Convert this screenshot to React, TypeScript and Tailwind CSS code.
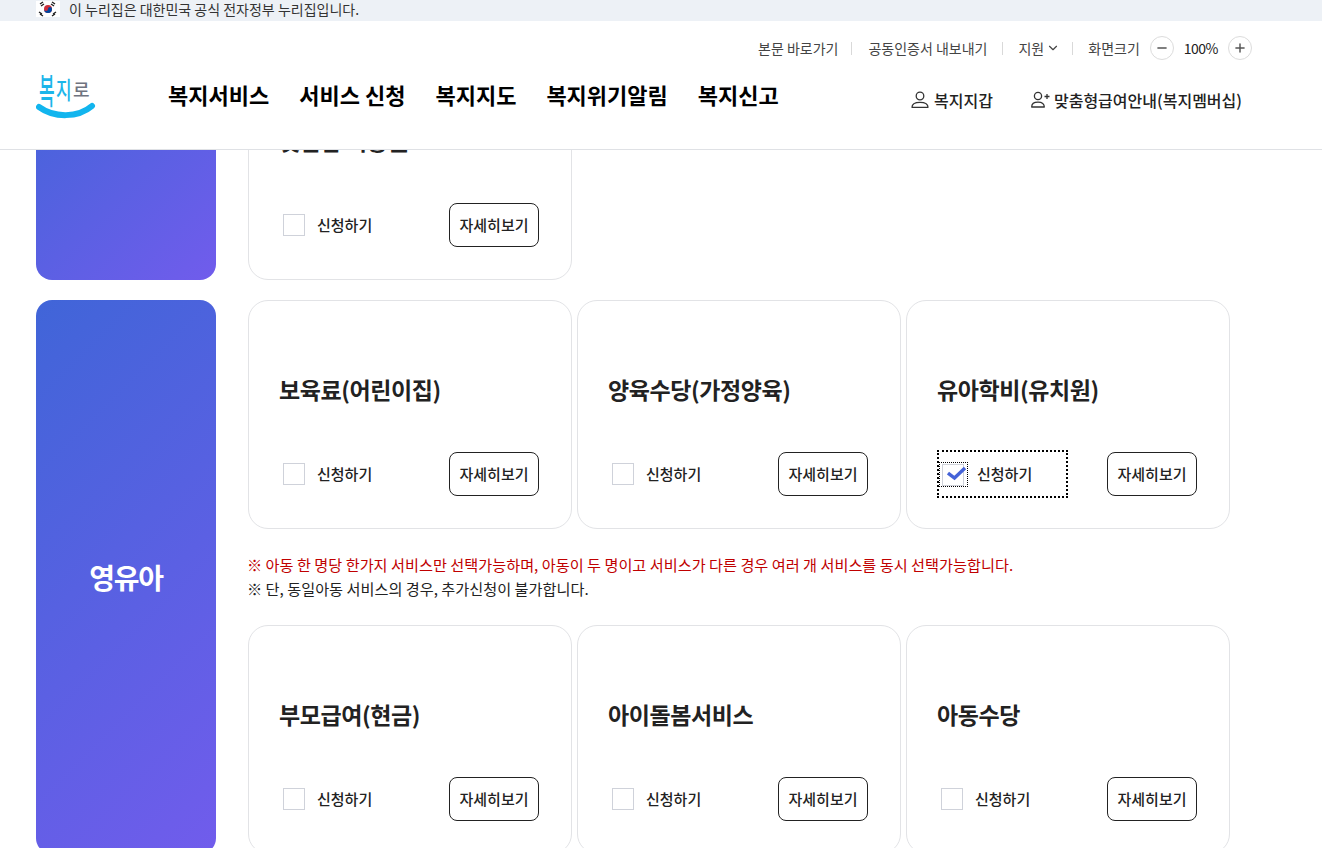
import { ChevronDown, Minus, Plus } from "lucide-react"

const font = { fontFamily: '"Noto Sans CJK KR", "Noto Sans", sans-serif' }

const menus = ["복지서비스", "서비스 신청", "복지지도", "복지위기알림", "복지신고"]

function Flag() {
  return (
    <svg width="24" height="16" viewBox="0 0 24 16" className="bg-white">
      <circle cx="12" cy="8" r="4" fill="#cd2e3a" />
      <path d="M8 8a4 4 0 0 0 8 0a2 2 0 0 0-4 0a2 2 0 0 1-4 0z" fill="#0047a0" />
      <path d="M4 3l3-2M5 5l3-2M16 1l3 2M15 3l3 2M4 13l3 2M3 11l3 2M16 15l3-2M17 13l3-2" stroke="#222" strokeWidth="1.4" />
    </svg>
  )
}

function Logo() {
  return (
    <div className="relative h-[52px] w-[60px]">
      <span className="absolute left-[3px] top-[8px] origin-center scale-y-[2.1] text-[17px] font-medium leading-[24px] text-[#1cb5ea]">복</span>
      <span className="absolute left-[20px] top-[8px] origin-center scale-y-[1.4] text-[17px] font-medium leading-[24px] text-[#1cb5ea]">지</span>
      <span className="absolute left-[37px] top-[8px] text-[18px] font-medium leading-[24px] text-[#6f7480]">로</span>
      <svg className="absolute left-0 top-[33px]" width="60" height="22" viewBox="0 0 60 22">
        <path d="M3 5C18 16 42 16 56 4" fill="none" stroke="#12b5ee" strokeWidth="6" strokeLinecap="round" />
      </svg>
    </div>
  )
}

function UserIcon({ plus }: { plus?: boolean }) {
  if (plus) {
    return (
      <svg width="20" height="18" viewBox="0 0 20 18" fill="none" stroke="#333" strokeWidth="1.3">
        <circle cx="8" cy="5" r="3.6" />
        <path d="M1.7 16c0-3.2 2-4.8 6.300-4.800s6.300 1.600 6.300 4.800z" strokeLinejoin="round" />
        <path d="M14.500 5.500h5M17 3v5" />
      </svg>
    )
  }
  return (
    <svg width="20" height="18" viewBox="0 0 20 18" fill="none" stroke="#333" strokeWidth="1.3">
      <circle cx="11" cy="5" r="3.800" />
      <path d="M3 16.300c0-3.400 2.800-5 8-5s8 1.600 8 5z" strokeLinejoin="round" />
    </svg>
  )
}

function Header() {
  return (
    <header className="relative z-10 h-[129px] shrink-0 border-b border-[#dfe1e5] bg-white">
      <div className="flex h-[54px] items-center justify-end pr-[70px] text-[14px] text-[#444]">
        <span>본문 바로가기</span>
        <span className="ml-[13px] mr-[16px] h-[13px] w-px bg-[#d9d9d9]" />
        <span>공동인증서 내보내기</span>
        <span className="mx-[15px] h-[13px] w-px bg-[#d9d9d9]" />
        <span className="flex items-center gap-[2px]">지원<ChevronDown size={14} /></span>
        <span className="ml-[12px] mr-[15px] h-[13px] w-px bg-[#d9d9d9]" />
        <span>화면크기</span>
        <span className="ml-[10px] flex h-[24px] w-[24px] items-center justify-center rounded-full border border-[#dcdcdc] text-[#555]"><Minus size={14} strokeWidth={2.5} /></span>
        <span className="mx-[10px] tracking-[-0.5px] text-[#222]">100%</span>
        <span className="flex h-[24px] w-[24px] items-center justify-center rounded-full border border-[#dcdcdc] text-[#555]"><Plus size={14} strokeWidth={2.5} /></span>
      </div>
      <div className="flex items-start pl-[36px] pr-[80px]">
        <div className="-mt-[6px]"><Logo /></div>
        <nav className="-mt-[1px] ml-[72px] flex gap-[30px] text-[22px] font-bold leading-[40px] text-black">
          {menus.map((menu) => <span key={menu}>{menu}</span>)}
        </nav>
        <div className="ml-auto flex items-center gap-[37px] pt-[5px] text-[16px] font-medium leading-[40px] text-[#222]">
          <span className="flex items-center gap-[5px]"><UserIcon />복지지갑</span>
          <span className="flex items-center gap-[4px]"><UserIcon plus />맞춤형급여안내(복지멤버십)</span>
        </div>
      </div>
    </header>
  )
}

function Card({ title, checked }: { title: string; checked?: boolean }) {
  return (
    <div className="flex h-[229px] w-[324px] flex-col rounded-[20px] border border-[#e2e3e6] bg-white pl-[30px] pr-[32px]">
      <div className="flex h-[151px] shrink-0 items-center pt-[26px] text-[23px] font-bold tracking-[-0.4px] text-[#222]">{title}</div>
      <div className="flex h-[44px] items-center justify-between">
        {checked ? (
          <div className="flex h-[48px] w-[131px] items-center border-2 border-dotted border-black text-[15px] font-medium text-[#222]">
            <span className="relative h-[25px] w-[29px] border border-dotted border-black">
              <span className="absolute left-[2px] top-[1px] h-[22px] w-[22px] border border-[#cfd2da]" />
              <svg className="absolute left-[7px] top-[3px]" width="20" height="16" viewBox="0 0 20 16"><path d="M1 7l6.500 5L18 2" fill="none" stroke="#4563d8" strokeWidth="3.4" /></svg>
            </span>
            <span className="ml-[9px]">신청하기</span>
          </div>
        ) : (
          <div className="flex items-center pl-[4px] text-[15px] font-medium text-[#222]">
            <span className="h-[22px] w-[22px] border border-[#cfd2da] bg-white" />
            <span className="ml-[12px]">신청하기</span>
          </div>
        )}
        <div className="flex h-[44px] w-[90px] items-center justify-center rounded-[8px] border border-[#222] text-[15px] font-medium text-[#222]">자세히보기</div>
      </div>
    </div>
  )
}

function Side({ label, className }: { label?: string; className: string }) {
  return (
    <div className={`flex w-[180px] shrink-0 items-center justify-center rounded-[16px] bg-[linear-gradient(135deg,#4065d8,#715cec)] text-[28px] font-bold tracking-[-1.2px] text-white ${className}`}>
      {label}
    </div>
  )
}

export default function App() {
  return (
    <div className="flex h-[848px] w-[1322px] flex-col overflow-hidden bg-white" style={font}>
      <div className="flex h-[21px] shrink-0 items-center gap-[9px] bg-[#edf1f6] pb-[4px] pl-[36px] text-[14px] leading-[16px] text-[#333]">
        <Flag />
        <span>이 누리집은 대한민국 공식 전자정부 누리집입니다.</span>
      </div>
      <Header />
      <main className="-mt-[99px] flex flex-col gap-[20px] pl-[36px]">
        <div className="flex gap-[32px]">
          <Side className="h-[229px]" />
          <Card title="첫만남 이용권" />
        </div>
        <div className="flex gap-[32px]">
          <Side label="영유아" className="self-stretch" />
          <div className="flex flex-col">
            <div className="flex gap-[5px]">
              <Card title="보육료(어린이집)" />
              <Card title="양육수당(가정양육)" />
              <Card title="유아학비(유치원)" checked />
            </div>
            <div className="mt-[23px] mb-[25px] -ml-[1px] text-[15.2px] leading-[24px] text-[#222]">
              <p className="text-[#c00000]">※ 아동 한 명당 한가지 서비스만 선택가능하며, 아동이 두 명이고 서비스가 다른 경우 여러 개 서비스를 동시 선택가능합니다.</p>
              <p>※ 단, 동일아동 서비스의 경우, 추가신청이 불가합니다.</p>
            </div>
            <div className="flex gap-[5px]">
              <Card title="부모급여(현금)" />
              <Card title="아이돌봄서비스" />
              <Card title="아동수당" />
            </div>
          </div>
        </div>
      </main>
    </div>
  )
}
